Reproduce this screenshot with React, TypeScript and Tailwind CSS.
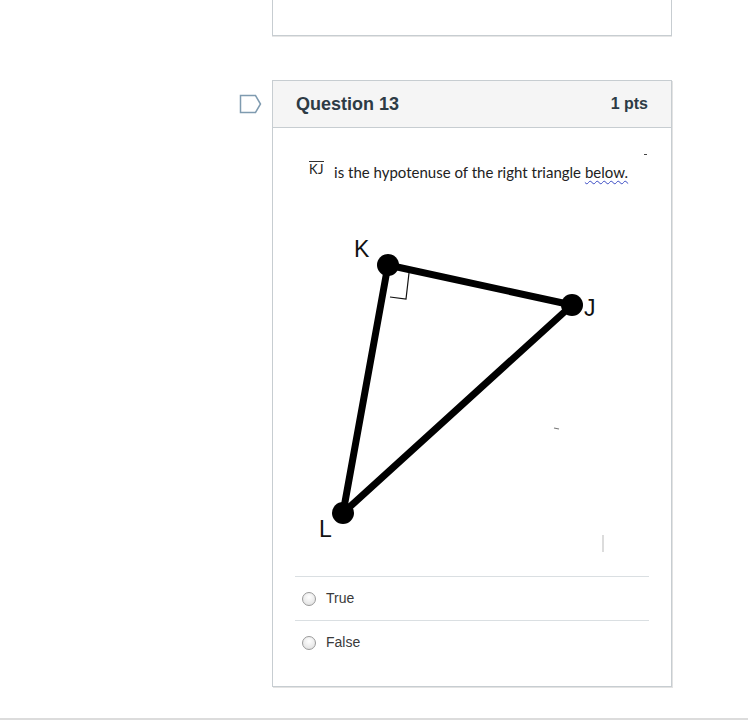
import React from 'react';

const answers = ['True', 'False'];

function Flag() {
  return (
    <svg width="24" height="20" viewBox="0 0 24 20" className="block">
      <path d="M1.5 1.5 H16.5 L21.5 10 L16.5 18.5 H1.5 Z" fill="none" stroke="#7f9bb0" strokeWidth="1.5" />
    </svg>
  );
}

function Triangle() {
  // coordinates relative to the figure box
  const K = { x: 93, y: 75 };
  const J = { x: 277, y: 115 };
  const L = { x: 48, y: 323 };
  return (
    <svg width="353" height="380" viewBox="0 0 353 380" className="block">
      <g stroke="#000" strokeWidth="7" strokeLinecap="round">
        <line x1={K.x} y1={K.y} x2={J.x} y2={J.y} />
        <line x1={K.x} y1={K.y} x2={L.x} y2={L.y} />
        <line x1={J.x} y1={J.y} x2={L.x} y2={L.y} />
      </g>
      <polyline points="95,107 111,109 114,83" fill="none" stroke="#111" strokeWidth="1.2" />
      <circle cx={K.x} cy={K.y} r="11" fill="#000" />
      <circle cx={J.x} cy={J.y} r="11" fill="#000" />
      <circle cx={L.x} cy={L.y} r="11" fill="#000" />
      <g fontFamily="'Liberation Sans', Arial, sans-serif" fontSize="23" fill="#111">
        <text x="59" y="67">K</text>
        <text x="289" y="126">J</text>
        <text x="24" y="347">L</text>
      </g>
      <line x1="259" y1="238" x2="264" y2="239" stroke="#777" strokeWidth="1.2" />
      <line x1="308" y1="345" x2="308" y2="362" stroke="#d0d0d0" strokeWidth="1.5" />
    </svg>
  );
}

export default function App() {
  return (
    <div className="w-[748px] h-[720px] bg-white relative overflow-hidden font-['Liberation_Sans',Arial,sans-serif]">
      {/* Previous question (tail) */}
      <div className="ml-[272px] w-[400px] h-[36px] border border-t-0 border-[#c7cdd1] shadow-[0_1px_0_#e6e6e6] bg-white" />

      {/* Question 13 */}
      <div className="flex mt-[44px]">
        <div className="w-[272px] flex justify-end pr-[9px] pt-[14px]">
          <Flag />
        </div>
        <div className="w-[400px] border border-[#c7cdd1] shadow-[1px_1px_0_#e3e3e3] bg-white">
          <div className="h-[47px] bg-[#f5f5f5] border-b border-[#c7cdd1] flex items-center justify-between pl-[23px] pr-[23px]">
            <span className="text-[18px] font-bold text-[#2d3b45]">Question 13</span>
            <span className="text-[16px] font-bold text-[#2d3b45]">1 pts</span>
          </div>

          <div className="px-[22px]">
            <div className="relative h-[62px]">
              <span className="absolute right-[2px] top-[26px] w-[3px] h-[1px] bg-[#444]" />
              <div className="absolute left-[14px] top-[33px] flex items-start font-['Lato',sans-serif] text-[#222]">
                <span className="text-[13px] leading-[14px] border-t border-[#333] mr-[10px] tracking-[0.5px]">KJ</span>
                <span className="text-[15px] leading-[18px] mt-[2px]">
                  is the hypotenuse of the right triangle{' '}
                  <span className="underline decoration-wavy decoration-[#3a4bc4] decoration-1 underline-offset-2">below.</span>
                </span>
              </div>
            </div>
            <Triangle />
            <div className="mt-[6px]">
              {answers.map((a) => (
                <div key={a} className="h-[44px] border-t border-[#dadfe2] flex items-center pl-[7px]">
                  <span className="w-[14px] h-[14px] rounded-full border border-[#9a9a9a] bg-[radial-gradient(circle_at_50%_35%,#ffffff,#dcdcdc)] mr-[10px]" />
                  <span className="text-[14px] text-[#3a3a3a]">{a}</span>
                </div>
              ))}
            </div>
            <div className="h-[22px]" />
          </div>
        </div>
      </div>

      <div className="absolute left-0 right-0 top-[718px] h-[2px] bg-[#dcdcdc]" />
    </div>
  );
}
